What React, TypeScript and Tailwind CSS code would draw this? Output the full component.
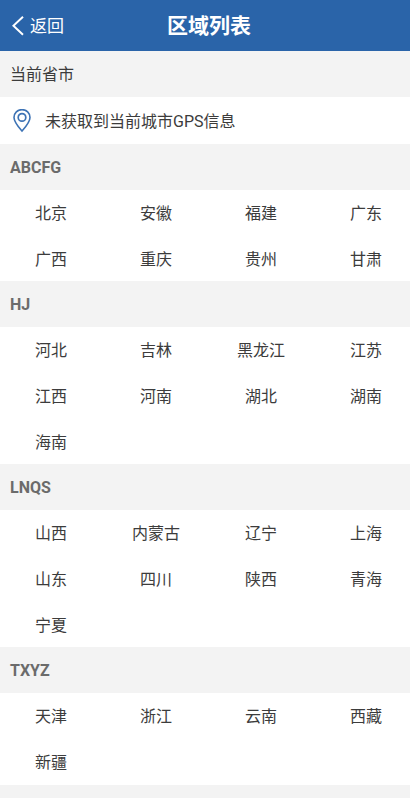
interface RegionGroup {
  letters: string;
  regions: string[];
}

const groups: RegionGroup[] = [
  {
    letters: 'ABCFG',
    regions: ['北京', '安徽', '福建', '广东', '广西', '重庆', '贵州', '甘肃'],
  },
  {
    letters: 'HJ',
    regions: ['河北', '吉林', '黑龙江', '江苏', '江西', '河南', '湖北', '湖南', '海南'],
  },
  {
    letters: 'LNQS',
    regions: ['山西', '内蒙古', '辽宁', '上海', '山东', '四川', '陕西', '青海', '宁夏'],
  },
  {
    letters: 'TXYZ',
    regions: ['天津', '浙江', '云南', '西藏', '新疆'],
  },
];

function BackIcon() {
  return (
    <svg
      className="h-5 w-3"
      viewBox="0 0 12 20"
      fill="none"
      stroke="currentColor"
      strokeWidth="2"
      aria-hidden="true"
    >
      <path d="M11 0.8 L1.4 9.8 L11 18.8" />
    </svg>
  );
}

function PinIcon() {
  return (
    <svg
      className="h-6 w-[18px] text-[#3d73b5]"
      viewBox="0 0 18 24"
      fill="none"
      stroke="currentColor"
      aria-hidden="true"
    >
      <path
        d="M9 22 C6.2 18.8 1 13 1 8.4 A8 7.8 0 0 1 17 8.4 C17 13 11.8 18.8 9 22 Z"
        strokeWidth="1.6"
      />
      <circle cx="9" cy="8.4" r="3.8" strokeWidth="1.7" />
    </svg>
  );
}

function RegionSection({ letters, regions }: RegionGroup) {
  return (
    <section className="-mt-px">
      <h2 className="flex h-[46px] items-center bg-[#f3f3f3] px-[10px] pt-[2px] font-bold text-[#6b6b6b]">
        {letters}
      </h2>
      <ul className="grid grid-cols-[repeat(4,70px)] justify-between bg-white pr-[9px] pl-4">
        {regions.map((region) => (
          <li key={region}>
            <button type="button" className="h-[46px] w-full cursor-pointer pt-[2px] text-center">
              {region}
            </button>
          </li>
        ))}
      </ul>
    </section>
  );
}

export default function App() {
  return (
    <div className="min-h-screen bg-[#f3f3f3] font-['Roboto','Noto_Sans_CJK_SC',sans-serif] text-base text-[#3c3c3c]">
      <header className="grid h-[51px] grid-cols-[1fr_auto_1fr] items-center bg-[#2a64a9] pr-1 pl-3 text-white">
        <button
          type="button"
          className="flex cursor-pointer items-center gap-[6px] justify-self-start text-[17px]"
        >
          <BackIcon />
          <span className="pt-[2px]">返回</span>
        </button>
        <h1 className="pt-[2px] text-[21px] font-bold">区域列表</h1>
      </header>
      <main>
        <h2 className="flex h-[46px] items-center px-[10px] pt-[2px]">当前省市</h2>
        <div className="flex h-12 items-center gap-[14px] bg-white px-[13px]">
          <PinIcon />
          <p className="pt-[2px]">未获取到当前城市GPS信息</p>
        </div>
        {groups.map((group) => (
          <RegionSection key={group.letters} {...group} />
        ))}
      </main>
    </div>
  );
}
